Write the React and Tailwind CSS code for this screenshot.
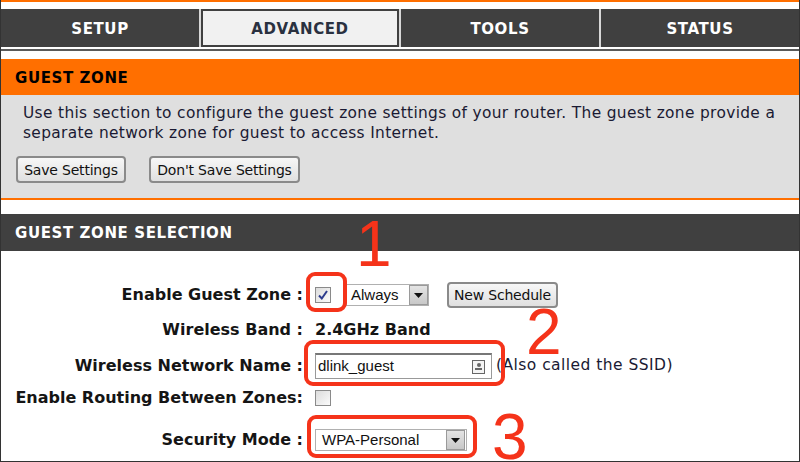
import React from 'react';

const tabs = ['SETUP', 'ADVANCED', 'TOOLS', 'STATUS'];

const Checkbox = ({ checked }) => (
  <span className="flex h-[16px] w-[16px] items-center justify-center border border-[#8a8a8a] bg-gradient-to-br from-[#dcdcdc] to-[#fbfbfb]">
    {checked && (
      <svg width="12" height="12" viewBox="0 0 12 12">
        <path d="M2 6.5 L4.8 9.5 L10 2" fill="none" stroke="#2b3a8c" strokeWidth="2" />
      </svg>
    )}
  </span>
);

const DropArrow = () => (
  <span className="flex h-full w-[19px] items-center justify-center border border-[#9a9a9a] bg-gradient-to-b from-[#e4e4e4] to-[#c8c8c8]">
    <svg width="9" height="5" viewBox="0 0 9 5">
      <path d="M0 0 H9 L4.5 5 Z" fill="#111" />
    </svg>
  </span>
);

const Button = ({ children, className = '' }) => (
  <button
    className={`whitespace-nowrap rounded-[4px] border-2 border-[#8a8a8a] bg-gradient-to-b from-[#f7f7f7] to-[#e0e0e0] px-0 text-[14px] leading-none tracking-[-0.2px] text-[#111] ${className}`}
  >
    {children}
  </button>
);

const Row = ({ label, children, className = '' }) => (
  <div className={`flex items-center ${className}`}>
    <div className="w-[304px] shrink-0 pr-[2px] text-right text-[16px] font-bold text-[#151515]">{label}</div>
    <div className="flex items-center pl-[10px]">{children}</div>
  </div>
);

const redNum = 'absolute text-[64px] leading-none text-[#f5331a]';

export default function App() {
  return (
    <div
      className="relative h-[462px] w-[800px] overflow-hidden border-x border-b border-[#333] bg-white"
      style={{ fontFamily: '"DejaVu Sans", Verdana, sans-serif' }}
    >
      <div className="h-[2px] bg-[#ff6f00]" />

      {/* top tabs */}
      <div className="mt-[7px] grid grid-cols-4 gap-[2px] bg-[#d8d8d8]">
        {tabs.map((t) =>
          t === 'ADVANCED' ? (
            <div
              key={t}
              className="flex h-[38px] items-center justify-center border-2 border-[#404040] bg-[#f1f1f1] pt-[2px] text-[15px] font-bold tracking-[0.6px] text-[#2a3140]"
            >
              {t}
            </div>
          ) : (
            <div
              key={t}
              className="flex h-[38px] items-center justify-center bg-[#404040] pt-[2px] text-[15px] font-bold tracking-[0.6px] text-white"
            >
              {t}
            </div>
          )
        )}
      </div>
      <div className="mt-[2px] h-[2px] bg-[#5a5a5a]" />

      {/* guest zone header */}
      <div className="mt-[8px] flex h-[36px] items-center bg-[#ff6f00] px-[14px] pt-[2px] text-[15px] font-bold tracking-[0.6px] text-black">
        GUEST ZONE
      </div>
      <div className="h-[105px] border-b-2 border-[#ff6f00] bg-[#dfdfdf] pl-[15px] pr-[10px] pt-[8px]">
        <p className="pl-[7px] text-[15.4px] leading-[20px] tracking-[0.34px] text-[#1a1a33]">
          Use this section to configure the guest zone settings of your router. The guest zone provide a
          separate network zone for guest to access Internet.
        </p>
        <div className="mt-[13px] flex gap-[23px]">
          <Button className="h-[27px] w-[110px]">Save Settings</Button>
          <Button className="h-[27px] w-[151px]">Don't Save Settings</Button>
        </div>
      </div>

      {/* selection header */}
      <div className="mt-[14px] flex h-[37px] items-center bg-[#404040] px-[14px] pt-[2px] text-[15px] font-bold tracking-[0.6px] text-white">
        GUEST ZONE SELECTION
      </div>

      <div className="pt-[26px]">
        <Row label="Enable Guest Zone :" className="h-[36px]">
          <Checkbox checked />
          <div
            className="ml-[15px] flex h-[22px] w-[83px] items-center justify-between border border-[#b0b0b0] bg-white pl-[4px] text-[15px] text-[#111]"
            style={{ fontFamily: '"Liberation Sans", Arial, sans-serif' }}
          >
            Always
            <DropArrow />
          </div>
          <Button className="ml-[18px] h-[26px] w-[111px]">New Schedule</Button>
        </Row>
        <Row label="Wireless Band :" className="h-[34px]">
          <span className="text-[16px] font-bold text-[#151515]">2.4GHz Band</span>
        </Row>
        <Row label="Wireless Network Name :" className="h-[38px]">
          <div
            className="flex h-[26px] w-[177px] items-center justify-between border border-[#999] border-t-2 border-t-[#777] bg-white pl-[2px] pr-[6px] text-[15px] text-[#111]"
            style={{ fontFamily: '"Liberation Sans", Arial, sans-serif' }}
          >
            dlink_guest
            <span className="flex h-[14px] w-[13px] flex-col items-center justify-center gap-[1px] border border-[#666] bg-[#f4f4f4]">
              <span className="h-[4px] w-[4px] rounded-full bg-[#666]" />
              <span className="h-[2px] w-[7px] bg-[#666]" />
            </span>
          </div>
          <span className="ml-[4px] whitespace-nowrap text-[15.5px] tracking-[0.45px] text-[#1a1a33]">
            (Also called the SSID)
          </span>
        </Row>
        <Row label="Enable Routing Between Zones:" className="h-[26px]">
          <Checkbox />
        </Row>
        <Row label="Security Mode :" className="mt-[14px] h-[30px]">
          <div
            className="flex h-[22px] w-[152px] items-center justify-between border border-[#b0b0b0] bg-white pl-[6px] pr-[1px] text-[15px] text-[#111]"
            style={{ fontFamily: '"Liberation Sans", Arial, sans-serif' }}
          >
            WPA-Personal
            <DropArrow />
          </div>
        </Row>
      </div>

      {/* red annotations */}
      <div className="absolute left-[305px] top-[272px] h-[40px] w-[41px] rounded-[9px] border-[4px] border-[#f5331a]" />
      <div className="absolute left-[303px] top-[340px] h-[46px] w-[201px] rounded-[9px] border-[4px] border-[#f5331a]" />
      <div className="absolute left-[306px] top-[415px] h-[43px] w-[170px] rounded-[9px] border-[4px] border-[#f5331a]" />
      <span className={`${redNum} left-[355px] top-[212px]`} style={{ fontFamily: '"Liberation Sans", Arial, sans-serif' }}>
        1
      </span>
      <span className={`${redNum} left-[525px] top-[300px]`} style={{ fontFamily: '"Liberation Sans", Arial, sans-serif' }}>
        2
      </span>
      <span className={`${redNum} left-[491px] top-[405px]`} style={{ fontFamily: '"Liberation Sans", Arial, sans-serif' }}>
        3
      </span>
    </div>
  );
}
